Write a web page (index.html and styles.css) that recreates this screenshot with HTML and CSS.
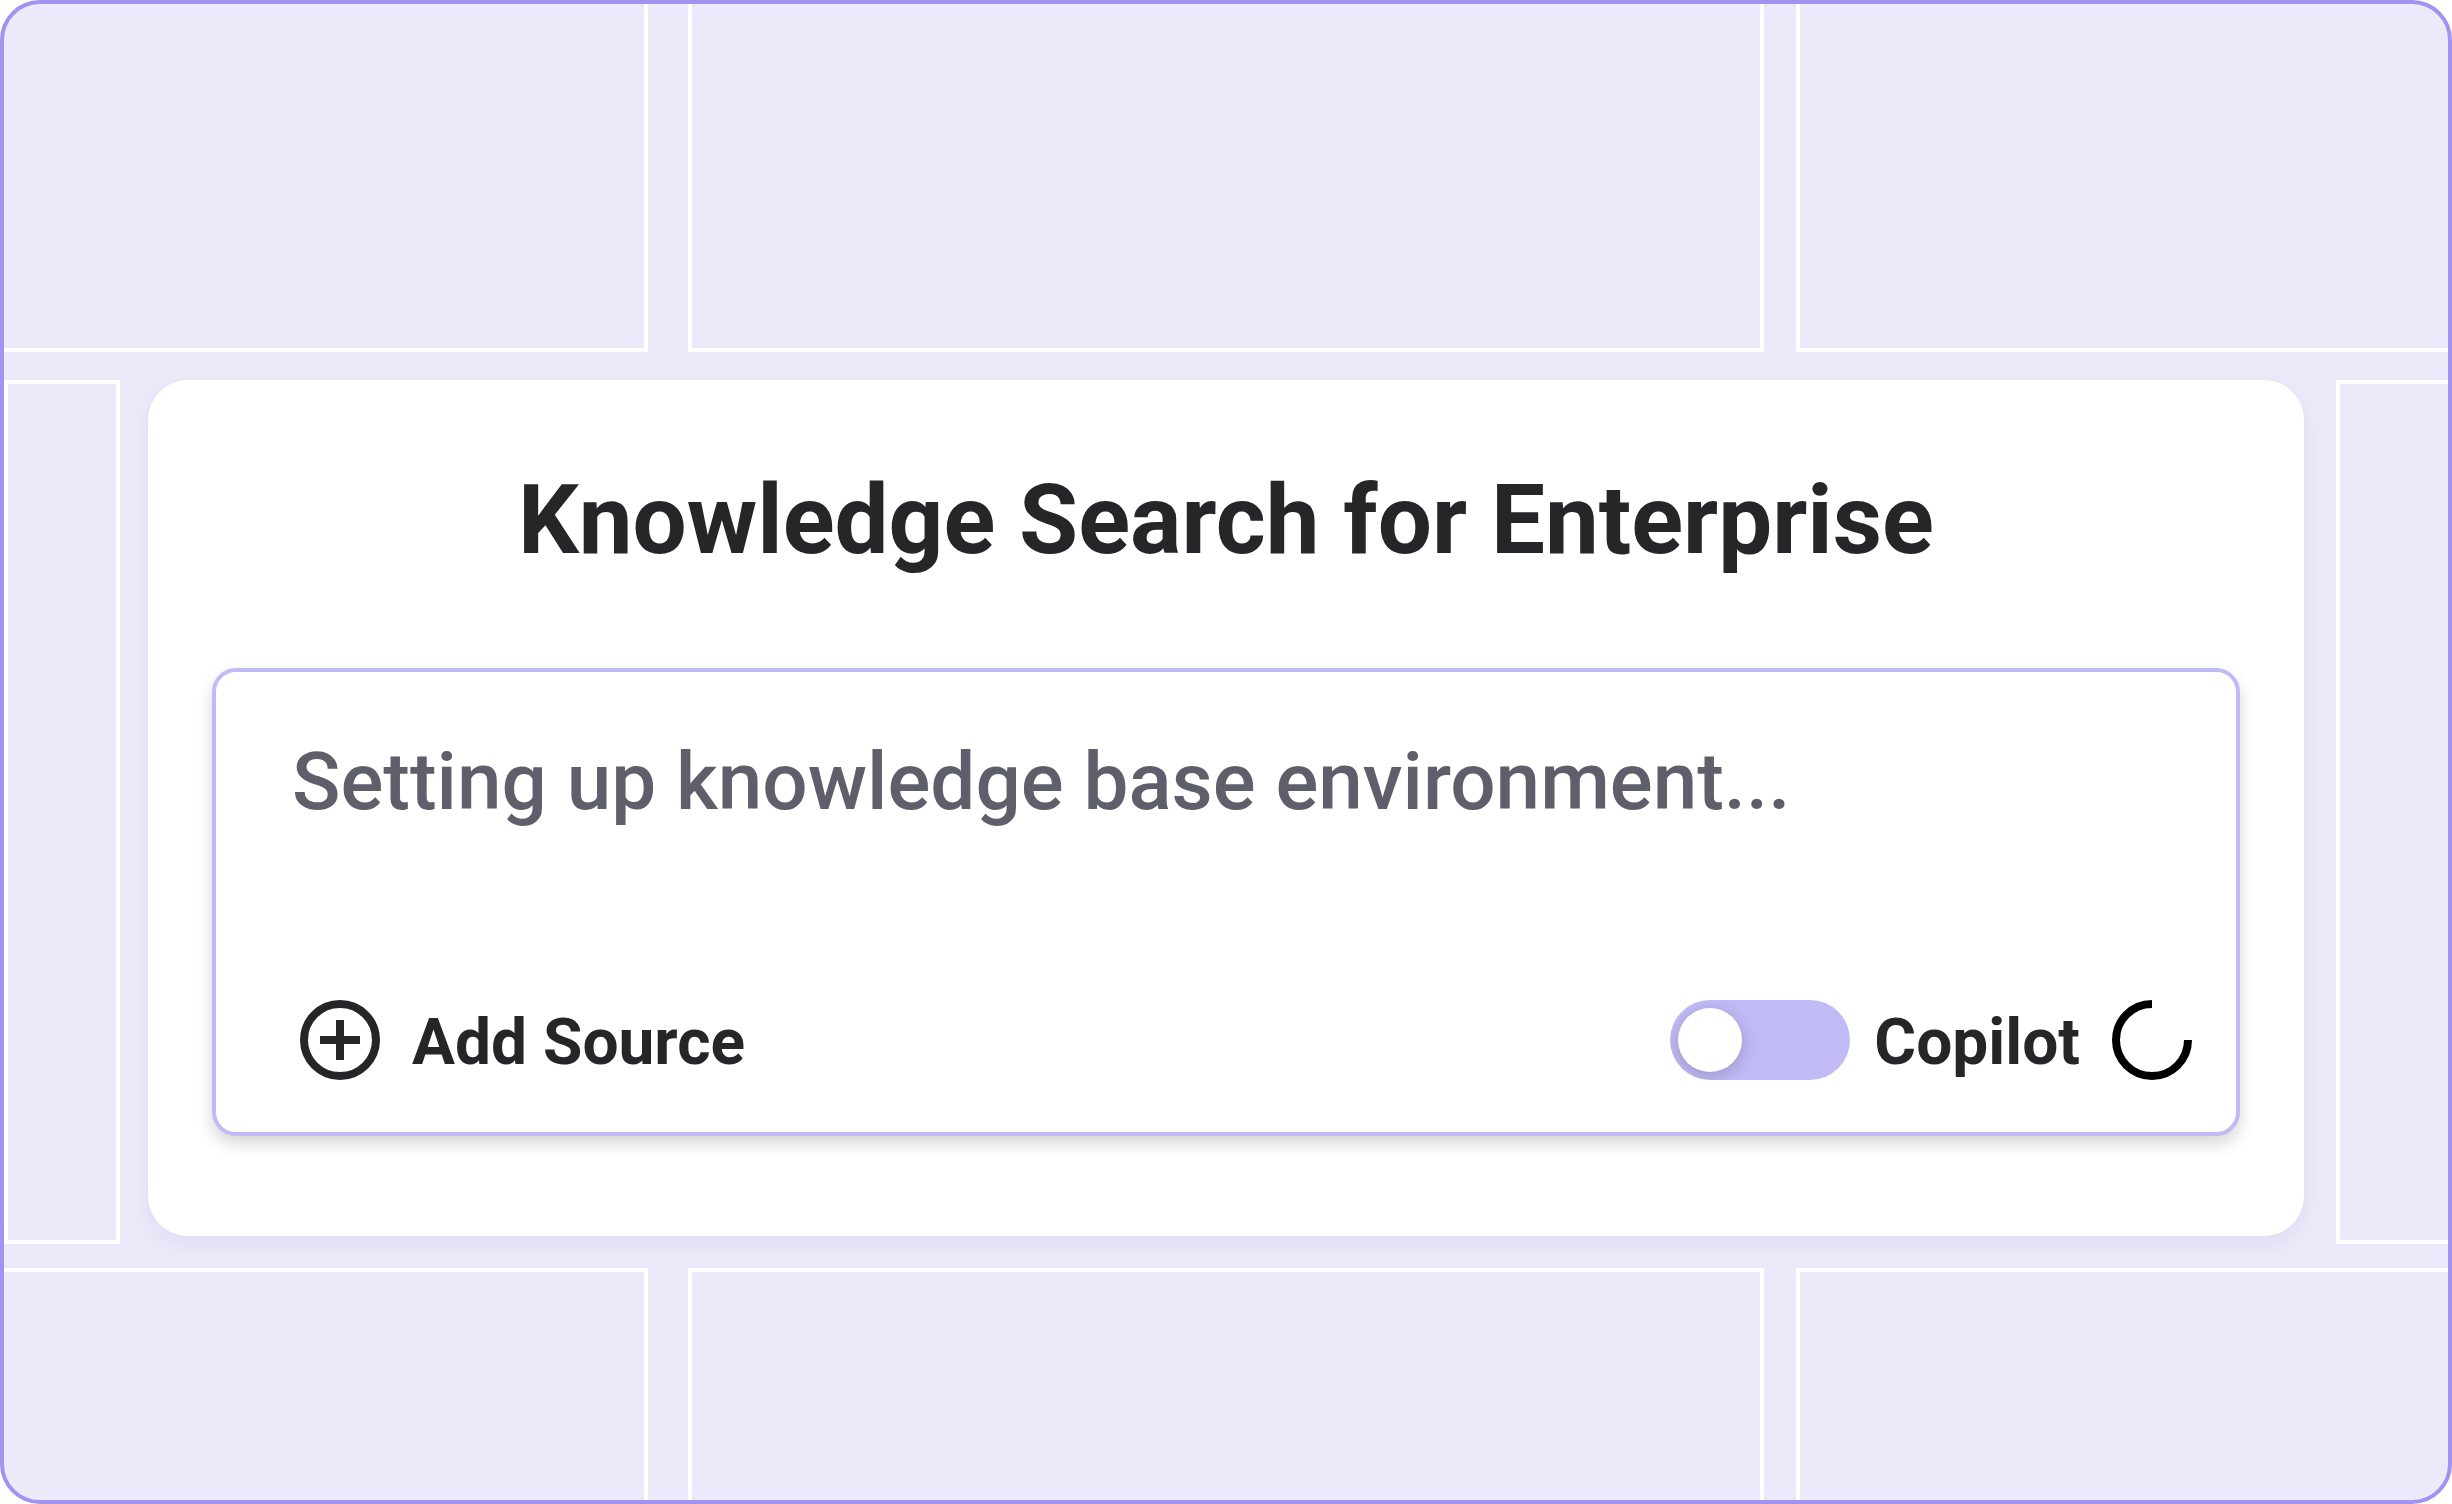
FILE: index.html
```html
<!DOCTYPE html>
<html lang="en">
<head>
    <meta charset="UTF-8">
    <meta name="viewport" content="width=device-width, initial-scale=1.0">
    <title>Knowledge Search for Enterprise</title>
    <link rel="stylesheet" href="styles.css">
</head>
<body>
    <div class="frame">
        <div class="tiles tiles-top">
            <div class="tile"></div>
            <div class="tile"></div>
            <div class="tile"></div>
        </div>

        <div class="middle">
            <div class="side side-left"></div>
            <main class="card">
                <h1>Knowledge Search for Enterprise</h1>
                <form class="search-box">
                    <textarea class="query" aria-label="Search query" placeholder="Setting up knowledge base environment..."></textarea>
                    <div class="toolbar">
                        <button type="button" class="add-source">
                            <svg class="icon" viewBox="0 0 24 24" fill="none" stroke="currentColor" stroke-width="2">
                                <circle cx="12" cy="12" r="9"/>
                                <path d="M12 7v10M7 12h10"/>
                            </svg>
                            <span class="label">Add Source</span>
                        </button>
                        <div class="copilot">
                            <input type="checkbox" id="copilot" class="switch">
                            <label for="copilot" class="label">Copilot</label>
                            <svg class="icon spinner" viewBox="0 0 24 24" fill="none" stroke="currentColor" stroke-width="2">
                                <path d="M12 3a9 9 0 1 0 9 9"/>
                            </svg>
                        </div>
                    </div>
                </form>
            </main>
            <div class="side side-right"></div>
        </div>

        <div class="tiles tiles-bottom">
            <div class="tile"></div>
            <div class="tile"></div>
            <div class="tile"></div>
        </div>
    </div>
</body>
</html>
```
FILE: styles.css
```css
* {
    box-sizing: border-box;
}
body {
    margin: 0;
    background: #fff;
    color: #262628;
    font-family: Roboto, "Liberation Sans", sans-serif;
}
.frame {
    display: grid;
    grid-template-rows: 3fr auto 2fr;
    min-height: 100vh;
    overflow: hidden;
    background: #ebeafb;
    border: 4px solid #a193f0;
    border-radius: 40px;
}

/* background tiles */
.tiles {
    display: grid;
    grid-template-columns: 163fr 269fr 163fr;
    column-gap: 32px;
}
.tile {
    border: 0 solid #fff;
    border-left-width: 4px;
    border-right-width: 4px;
}
.tile:first-child {
    border-left-width: 0;
    margin-right: 8px;
}
.tile:last-child {
    border-right-width: 0;
}
.tiles-top .tile {
    border-bottom-width: 4px;
}
.tiles-bottom .tile {
    border-top-width: 4px;
}
.middle {
    display: grid;
    grid-template-columns: 116px 1fr 112px;
    margin: 28px 0 24px;
}
.side {
    border: 4px solid #fff;
}
.side-right {
    border-right: 0;
}

/* search card */
.card {
    margin: 0 32px 8px 28px;
    padding: 80px 64px 100px;
    background: #fff;
    border-radius: 40px;
    box-shadow: 0 8px 24px rgba(38, 30, 60, 0.06);
}
h1 {
    margin: 0 0 88px;
    font-size: 96px;
    font-weight: 700;
    line-height: 120px;
    text-align: center;
}
.search-box {
    padding: 62px 36px 44px 76px;
    background: #fff;
    border: 4px solid #c0baf6;
    border-radius: 24px;
    box-shadow: 0 8px 16px rgba(0, 0, 0, 0.16);
}
.query {
    display: block;
    width: 100%;
    height: 192px;
    margin: 0 0 66px;
    padding: 0;
    border: 0;
    outline: 0;
    resize: none;
    background: none;
    color: #262628;
    font: 500 80px/96px Roboto, "Liberation Sans", sans-serif;
}
.query::placeholder {
    color: #5f5f6b;
    opacity: 1;
}
.toolbar,
.add-source,
.copilot {
    display: flex;
    align-items: center;
}
.toolbar {
    justify-content: space-between;
}
.add-source,
.copilot {
    gap: 24px;
}
.add-source {
    padding: 0;
    border: 0;
    background: none;
    color: inherit;
    font: inherit;
    cursor: pointer;
}
.label {
    padding-top: 6px;
    font-size: 64px;
    font-weight: 700;
    line-height: 90px;
}
.icon {
    width: 96px;
    height: 96px;
}
.spinner {
    color: #000;
}
.switch {
    appearance: none;
    width: 180px;
    height: 80px;
    margin: 0;
    padding: 8px;
    overflow: hidden;
    border-radius: 40px;
    background: #c0baf6;
    cursor: pointer;
}
.switch::before {
    content: "";
    display: block;
    width: 64px;
    height: 64px;
    border-radius: 50%;
    background: #fff;
    box-shadow: 0 4px 16px rgba(0, 0, 0, 0.2);
}
.switch:checked::before {
    margin-left: auto;
}
```
